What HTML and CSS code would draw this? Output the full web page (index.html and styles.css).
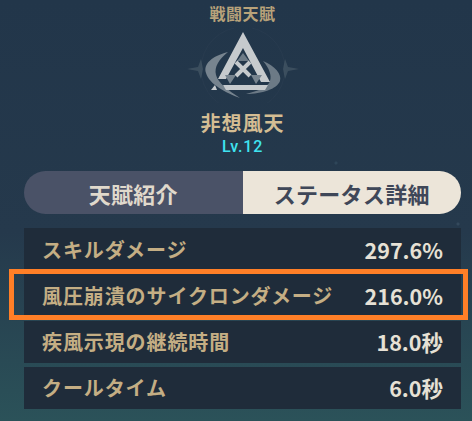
FILE: index.html
```html
<!DOCTYPE html>
<html lang="ja">
<head>
  <meta charset="UTF-8">
  <title>戦闘天賦</title>
  <link rel="stylesheet" href="styles.css">
</head>
<body>
  <div class="panel">
    <div class="kind">戦闘天賦</div>
    <svg class="icon" width="130" height="75" viewBox="0 0 130 75">
      <!-- faint ring + star tips -->
      <circle cx="65" cy="41" r="42" fill="none" stroke="#3a4d5f" stroke-width="1" opacity=".2"/>
      <path d="M9 41 L20 39 L23 31 L25 41 L23 51 L20 43Z" fill="#50636f" opacity=".55"/>
      <path d="M121 41 L110 39 L107 31 L105 41 L107 51 L110 43Z" fill="#50636f" opacity=".55"/>
      <!-- swirl -->
      <path d="M50 24 C34 28 25 36 28 45 C31 56 48 65 62 70 C50 62 40 55 38 47 C36 39 41 31 50 24Z" fill="#77848f"/>
      <path d="M85 33 C97 38 104 46 102 53 C99 61 84 66 68 66 C80 63 90 59 92 53 C94 47 91 40 85 33Z" fill="#6c7a86"/>
      <!-- triangle -->
      <path d="M65 4 L92 54 L83 54 L65 20 L48 51 L40 51Z" fill="#c6cacd"/>
      <path d="M45 57 L90 57 L87 62 L48 62Z" fill="#c6cacd"/>
      <path d="M33 62 L37 57 L39 62Z" fill="#c6cacd"/>
      <!-- inner marks -->
      <path d="M59 33 L65 25 L71 33Z" fill="#6d7b87"/>
      <path d="M47 47 L58 47 L52 56Z" fill="#77848f"/>
      <path d="M73 47 L84 47 L78 56Z" fill="#77848f"/>
      <path d="M58 34 L72 48 M72 34 L58 48" stroke="#c6cacd" stroke-width="4" fill="none"/>
    </svg>
    <div class="name">非想風天</div>
    <div class="level">Lv.12</div>

    <div class="tabs">
      <div class="tab">天賦紹介</div>
      <div class="tab active">ステータス詳細</div>
    </div>

    <div class="rows">
      <div class="row"><span class="label">スキルダメージ</span><span class="value">297.6%</span></div>
      <div class="row"><span class="label">風圧崩潰のサイクロンダメージ</span><span class="value">216.0%</span></div>
      <div class="row"><span class="label">疾風示現の継続時間</span><span class="value">18.0秒</span></div>
      <div class="row"><span class="label">クールタイム</span><span class="value">6.0秒</span></div>
    </div>
    <div class="mark"></div>
  </div>
</body>
</html>
```

FILE: styles.css
```css
html, body { margin:0; padding:0; }
body {
  width:472px; height:421px; overflow:hidden;
  font-family:"Noto Sans CJK JP", "Noto Sans", sans-serif;
  background:
    radial-gradient(circle at 458px 224px, #34495c 0, #34495c 1px, transparent 2px),
    radial-gradient(circle at 336px 163px, #2e4659 0, #2e4659 1px, transparent 2px),
    linear-gradient(180deg, #22364a 0%, #25394c 55%, #2b5259 100%);
}
.panel { position:relative; display:flex; flex-direction:column; align-items:center; padding:0 11px 0 24px; height:421px; box-sizing:border-box; }
.kind { margin-top:3px; height:20px; line-height:20px; font-size:16px; font-weight:700; letter-spacing:.5px; color:#b8a27a; }
.icon { display:block; margin-top:5px; }
.name { margin-top:5px; height:30px; line-height:30px; font-size:20px; font-weight:700; letter-spacing:1px; color:#d4bd93; }
.level { height:20px; line-height:18px; font-size:16px; font-weight:500; letter-spacing:.8px; color:#3fe3f0; font-family:"Roboto", sans-serif; }

.tabs { display:flex; width:437px; height:43px; margin-top:13px; border-radius:22px; overflow:hidden; }
.tab { flex:1; display:flex; align-items:center; justify-content:center; font-size:22px; font-weight:700; letter-spacing:.3px; color:#e0d9cc; background:#4a5267; }
.tab.active { color:#3f4758; background:#ece5d9; }

.rows { display:flex; flex-direction:column; gap:4px; width:437px; margin-top:14px; }
.row { display:flex; align-items:center; justify-content:space-between; height:42.250px; padding:0 18px; box-sizing:border-box; background:#1f2c3a; }
.label { font-size:20px; font-weight:700; letter-spacing:.9px; color:#c4ae84; white-space:nowrap; }
.value { font-size:21.500px; font-weight:700; color:#e6e1d5; white-space:nowrap; }

.mark { position:absolute; left:9px; top:269px; width:459px; height:51px; box-sizing:border-box; border:5px solid #ff7f27; }
```
